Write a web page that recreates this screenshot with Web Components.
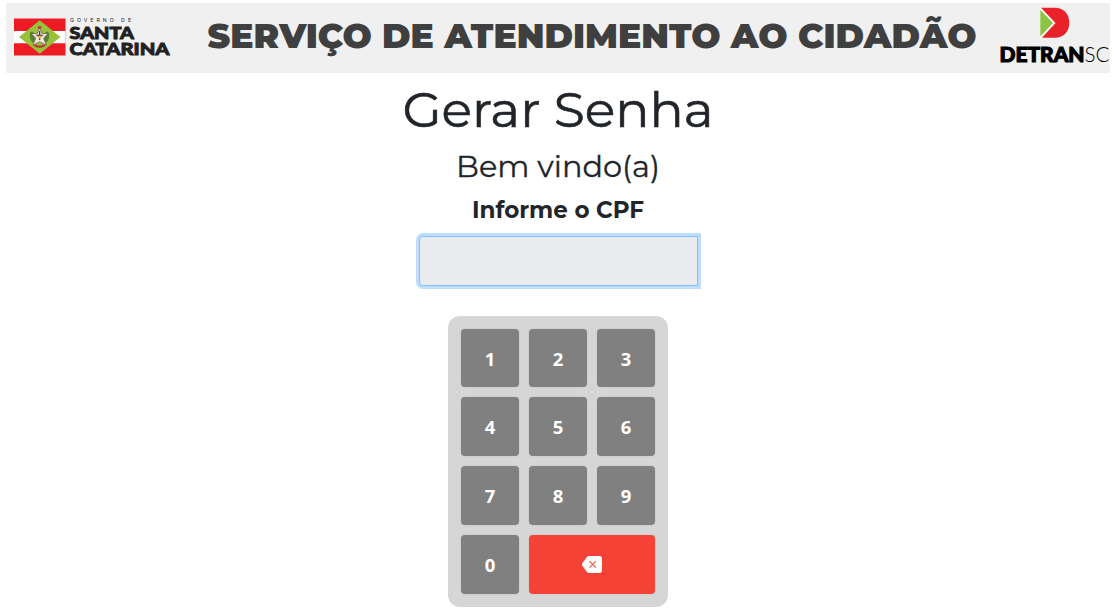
<!DOCTYPE html>
<html lang="pt-BR">
<head>
<meta charset="utf-8">
<title>Gerar Senha</title>
<style>
html,body{margin:0;background:#fff;height:608px;overflow:hidden;font-family:Inter,"Liberation Sans",sans-serif;color:#212529}
</style>
</head>
<body>
<ticket-page></ticket-page>
<script>
const define = (name, html) => customElements.define(name, class extends HTMLElement {
  constructor() {
    super();
    this.attachShadow({mode: 'open'}).innerHTML = html;
  }
});

// One line of text set to an exact measure: w, h = box; x, len = line start and width; base = baseline
customElements.define('fit-text', class extends HTMLElement {
  connectedCallback() {
    const a = n => this.getAttribute(n);
    this.attachShadow({mode: 'open'}).innerHTML = `
      <style>:host{display:block;flex:none}svg{display:block;overflow:visible}text{fill:currentColor;stroke:currentColor;stroke-width:${a('stroke') || 0};font-family:Montserrat,Inter,"Liberation Sans",sans-serif}</style>
      <svg width="${a('w')}" height="${a('h')}"><text x="${a('x')}" y="${a('base')}" font-size="${a('size')}" font-weight="${a('weight')}" textLength="${a('len')}" lengthAdjust="spacingAndGlyphs">${a('text')}</text></svg>`;
  }
});

define('sc-logo', `
<style>:host{display:block;flex:none}svg{display:block}text{font-family:Lato,Inter,sans-serif;fill:#222021}.b{stroke:#222021;stroke-width:.9}</style>
<svg width="164" height="50" viewBox="0 0 164 50">
  <path fill="#ed1c24" d="M0 3.500h51.500v37H0z"/>
  <path fill="#fff" d="M0 16h51.500v12.200H0z"/>
  <path fill="#98c23c" d="M25.700 5.300 46.500 22 25.700 38.700 5 22z"/>
  <path fill="#59822f" d="M16 18q2-3 4 0l1 7-2 3q-4-3-3-10zM35 18q-2-3-4 0l-1 7 2 3q4-3 3-10z"/>
  <path fill="#efe7dc" stroke="#655049" stroke-width=".7" d="m25.600 12.500 2.400 6.200 6.300-.2-4.700 4.600 2.800 7.200-6.800-3.600-6.600 3.600 2.700-7.200-4.800-4.600 6.400.2z"/>
  <path fill="#b5402f" d="M23.600 11.200h4l-.5 2.500h-3zM20 29l5.600 1.700L31.500 29l-1.200 3-4.700 1-4.800-1z"/>
  <path stroke="#5b3c37" stroke-width="1.300" fill="none" d="M25.600 16v9M22.500 20.500h6.200"/>
  <circle cx="25.600" cy="22" r="1.500" fill="#d9b34c"/>
  <text x="56" y="7.200" font-size="5.200" textLength="61" style="font-family:Inter">GOVERNO DE</text>
  <text class="b" x="55.500" y="23.700" font-size="17" font-weight="900" textLength="64.500" lengthAdjust="spacingAndGlyphs">SANTA</text>
  <text class="b" x="55.500" y="40.300" font-size="17" font-weight="900" textLength="100" lengthAdjust="spacingAndGlyphs">CATARINA</text>
</svg>`);

define('detran-logo', `
<style>:host{display:block;flex:none}svg{display:block;overflow:visible}text{font-family:Lato,Inter,sans-serif;fill:#000}.b{stroke:#000;stroke-width:1.100}</style>
<svg width="110" height="60" viewBox="0 0 110 60">
  <path fill="#fff" d="m40 2 15 16-15 15z"/>
  <path fill="#e92128" d="M41 2.800h14c9 0 14.300 6.600 14.300 15S64 32.800 55 32.800H42L55.500 18z"/>
  <path fill="#8cc341" d="M40.300 4.700 53 18 40.300 31.600z"/>
  <text class="b" x="-.5" y="57.200" font-size="20.500" font-weight="900" textLength="85" lengthAdjust="spacingAndGlyphs">DETRAN</text>
  <text x="84.500" y="57.400" font-size="21" font-weight="300" textLength="25" lengthAdjust="spacingAndGlyphs">SC</text>
</svg>`);

define('service-banner', `
<style>
:host{display:flex;box-sizing:border-box;width:1104px;height:70px;background:#f0f0f0;padding:0 0 0 8px;align-items:flex-start;color:#3f3f3f}
sc-logo{margin-top:12px}
fit-text{margin:12px 0 0 28px}
detran-logo{margin:2px 0 0 24px}
</style>
<sc-logo></sc-logo>
<fit-text w="770" h="46" x="1.5" base="33" size="34" weight="900" len="769" text="SERVIÇO DE ATENDIMENTO AO CIDADÃO"></fit-text>
<detran-logo></detran-logo>`);

define('cpf-field', `
<style>
:host{display:block}
input{display:block;box-sizing:border-box;width:279px;height:50px;padding:6px 12px;border:1px solid #80bdff;border-radius:4px 0 0 4px;background:#e9ecef;box-shadow:0 0 0 3px #bfdeff;outline:0;font:22px Inter,sans-serif;color:#495057}
</style>
<input readonly aria-label="CPF">`);

define('pad-key', `
<style>
:host{display:block}
button{display:flex;align-items:center;justify-content:center;width:100%;height:100%;box-sizing:border-box;margin:0;padding:0;border:0;border-radius:4px;background:#808080;color:#fff;box-shadow:0 0 2px rgba(0,0,0,.13);font:700 18.500px "Open Sans","Noto Sans",sans-serif}
:host([danger]) button{background:#f44336}
</style>
<button><slot></slot></button>`);

define('number-pad', `
<style>
:host{display:grid;box-sizing:border-box;width:220px;height:291px;padding:13px;grid-template-columns:repeat(3,58px);grid-template-rows:58px 59px 59px 59px;gap:10px;background:#d6d6d6;border-radius:12px}
.wide{grid-column:span 2}
svg{display:block}
</style>
<pad-key>1</pad-key><pad-key>2</pad-key><pad-key>3</pad-key>
<pad-key>4</pad-key><pad-key>5</pad-key><pad-key>6</pad-key>
<pad-key>7</pad-key><pad-key>8</pad-key><pad-key>9</pad-key>
<pad-key>0</pad-key>
<pad-key class="wide" danger><svg width="20" height="17" viewBox="0 0 20 17" aria-label="Apagar"><path fill="#fff" d="M7 0h10.300Q20 0 20 2.700v11.600q0 2.700-2.700 2.700H7q-1.200 0-2-.9L.5 10Q-.5 8.500.5 7L5 .9Q5.800 0 7 0z"/><path d="m7.500 5.200 6.400 6.400m0-6.400-6.400 6.400" stroke="#f4593f" stroke-width="1.200" fill="none"/></svg></pad-key>`);

define('ticket-page', `
<style>
:host{display:flex;flex-direction:column;align-items:center;box-sizing:border-box;width:1116px;padding-top:3px}
.title{margin-top:12px}
.welcome{margin-top:8px}
.label{margin-top:5px}
cpf-field{margin:10px 0 30px 1px}
</style>
<service-banner></service-banner>
<fit-text class="title" w="312" h="60" x="0.5" base="42" size="49.5" weight="400" stroke=".6" len="311" text="Gerar Senha"></fit-text>
<fit-text class="welcome" w="204" h="36" x="0" base="24" size="29.5" weight="400" stroke=".3" len="204" text="Bem vindo(a)"></fit-text>
<fit-text class="label" w="174" h="32" x="1" base="24" size="23" weight="700" len="172" text="Informe o CPF"></fit-text>
<cpf-field></cpf-field>
<number-pad></number-pad>`);
</script>
</body>
</html>
